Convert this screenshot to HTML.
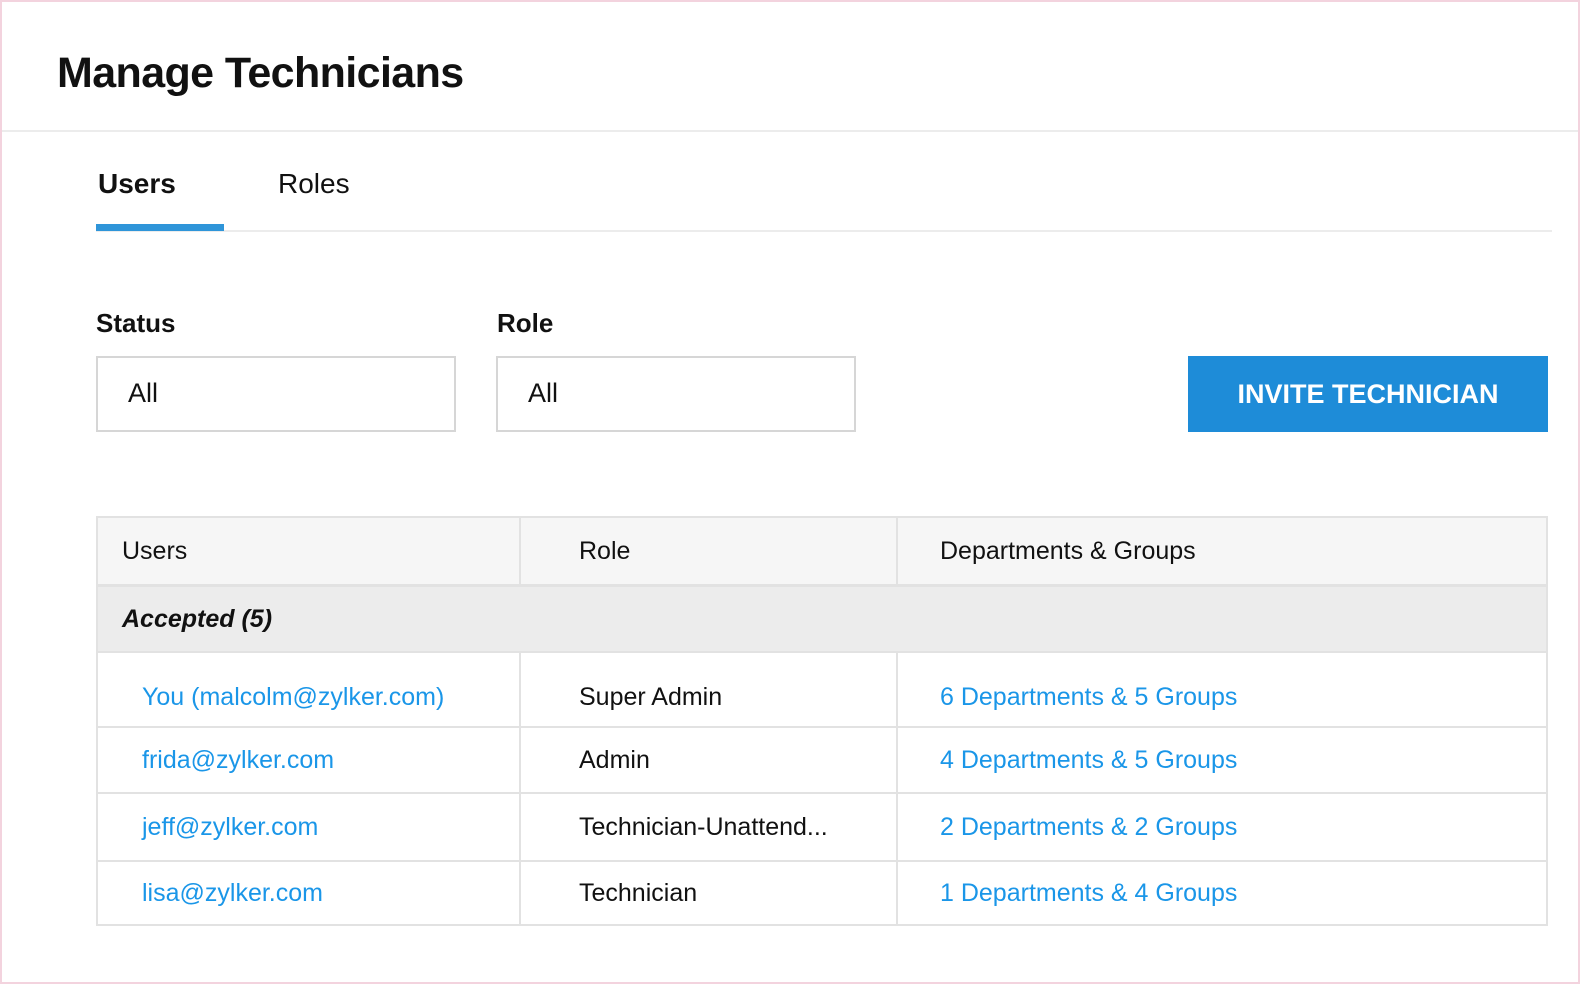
<!DOCTYPE html>
<html><head><meta charset="utf-8"><style>
*{box-sizing:border-box;margin:0;padding:0}
body{width:1580px;height:984px;background:#fff;font-family:"Liberation Sans",sans-serif;color:#111;position:relative;overflow:hidden}
.frame{position:absolute;left:0;top:0;width:1580px;height:984px;border:2px solid #f3d3de}
.abs{position:absolute}
h1{position:absolute;left:57px;top:49px;font-size:43px;font-weight:700;letter-spacing:-0.6px}
.hl{position:absolute;left:2px;right:2px;top:130px;height:2px;background:#ececec}
.tab{position:absolute;top:168px;font-size:28px}
.input{position:absolute;top:356px;height:76px;border:2px solid #d6d6d6;font-size:27px;padding:20px 0 0 30px}
.lbl{position:absolute;top:308px;font-size:26px;font-weight:700}
.btn{position:absolute;left:1188px;top:356px;width:360px;height:76px;background:#1e8cd8;color:#fff;font-size:27px;font-weight:700;text-align:center;line-height:76px}
.tbl{position:absolute;left:96px;top:516px;width:1452px;border:2px solid #e2e2e2}
.row{display:flex;border-top:2px solid #e2e2e2;font-size:25px}
.row:first-child{border-top:none}
.c1{width:423px;border-right:2px solid #e2e2e2;padding-left:44px}
.c2{width:377px;border-right:2px solid #e2e2e2;padding-left:58px}
.c3{flex:1;padding-left:42px}
.row div{display:flex;align-items:center}
a{color:#1a96e8;text-decoration:none}
</style></head><body>
<div class="frame"></div>
<h1>Manage Technicians</h1>
<div class="hl"></div>
<div class="tab" style="left:98px;font-weight:700">Users</div>
<div class="tab" style="left:278px">Roles</div>
<div class="abs" style="left:96px;top:230px;width:1456px;height:2px;background:#ececec"></div>
<div class="abs" style="left:96px;top:224px;width:128px;height:7px;background:#2f95d9"></div>
<div class="lbl" style="left:96px">Status</div>
<div class="lbl" style="left:497px">Role</div>
<div class="input" style="left:96px;width:360px">All</div>
<div class="input" style="left:496px;width:360px">All</div>
<div class="btn">INVITE TECHNICIAN</div>
<div class="tbl">
<div class="row" style="height:66px;background:#f6f6f6"><div class="c1" style="padding-left:24px">Users</div><div class="c2">Role</div><div class="c3">Departments &amp; Groups</div></div>
<div class="row" style="height:67px;background:#ececec;border-top-width:3px"><div style="padding-left:24px;font-style:italic;font-weight:700">Accepted (5)</div></div>
<div class="row" style="height:75px;border-top-width:2px"><div class="c1" style="padding-top:16px"><a>You (malcolm@zylker.com)</a></div><div class="c2" style="padding-top:16px">Super Admin</div><div class="c3" style="padding-top:16px"><a>6 Departments &amp; 5 Groups</a></div></div>
<div class="row" style="height:66px"><div class="c1"><a>frida@zylker.com</a></div><div class="c2">Admin</div><div class="c3"><a>4 Departments &amp; 5 Groups</a></div></div>
<div class="row" style="height:68px"><div class="c1"><a>jeff@zylker.com</a></div><div class="c2">Technician-Unattend...</div><div class="c3"><a>2 Departments &amp; 2 Groups</a></div></div>
<div class="row" style="height:64px"><div class="c1"><a>lisa@zylker.com</a></div><div class="c2">Technician</div><div class="c3"><a>1 Departments &amp; 4 Groups</a></div></div>
</div>
</body></html>
